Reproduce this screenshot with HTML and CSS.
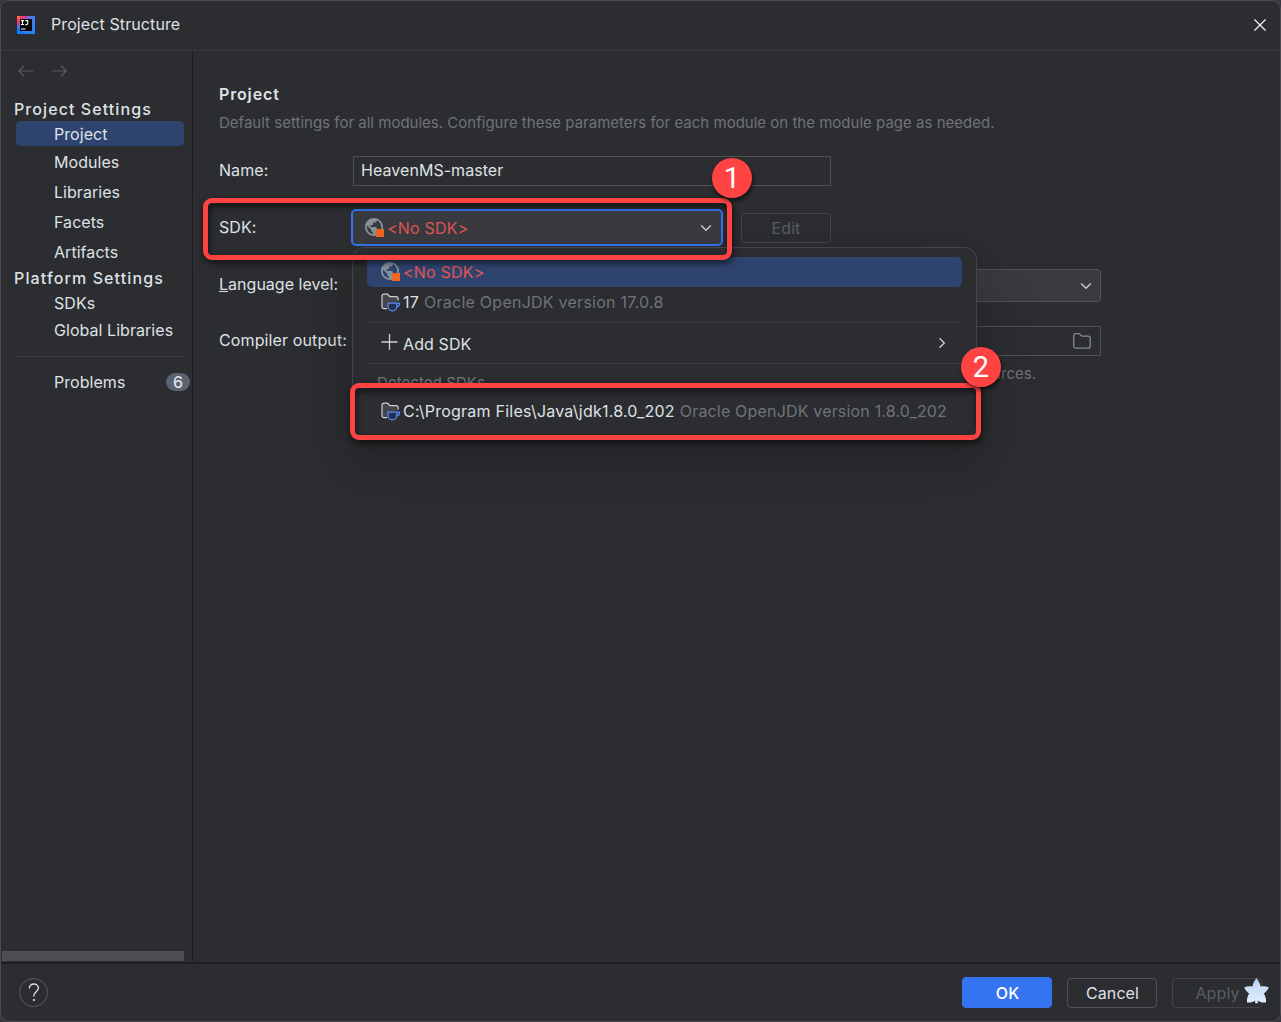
FILE: index.html
```html
<!DOCTYPE html>
<html lang="en">
<head>
<meta charset="utf-8">
<title>Project Structure</title>
<link rel="stylesheet" href="styles.css">
</head>
<body>
<svg width="0" height="0" class="defs" aria-hidden="true">
  <symbol id="globe" viewBox="0 0 20 20">
    <path transform="translate(-1.800 -1.800) scale(.9)" d="M12 2C6.480 2 2 6.480 2 12s4.480 10 10 10 10-4.480 10-10S17.520 2 12 2zm-1 17.930c-3.950-.490-7-3.850-7-7.930 0-.620.080-1.210.210-1.790L9 15v1c0 1.100.9 2 2 2v1.930zm6.900-2.540c-.260-.810-1-1.390-1.900-1.390h-1v-3c0-.550-.450-1-1-1H8v-2h2c.550 0 1-.450 1-1V7h2c1.100 0 2-.9 2-2v-.410c2.930 1.190 5 4.060 5 7.410 0 2.080-.8 3.970-2.100 5.390z" fill="#87939a"/>
    <rect x="11" y="11" width="8" height="8" fill="#f26522"/>
  </symbol>
  <symbol id="jdk" viewBox="0 0 20 20">
    <path d="M6 16.700H3a2 2 0 0 1-2-2V4a1.800 1.800 0 0 1 1.800-1.800h3.700l2.500 2.400H15A2.200 2.200 0 0 1 17.200 6.800V8.500" fill="#43454a" stroke="#ced0d6" stroke-width="1.200"/>
    <path d="M7 11.200h8.800v3.200a4.400 4.400 0 0 1-8.800 0zM15.800 11.200h2.800c.2 2.300-1 3.300-3 3.300" fill="#25324d" stroke="#548af7" stroke-width="1.300"/>
  </symbol>
  <symbol id="down" viewBox="0 0 12 8"><path d="m1.200 1.500 4.800 4.800 4.800-4.800" fill="none" stroke="#ced0d6" stroke-width="1.300"/></symbol>
</svg>
<div class="window">
  <header class="titlebar">
    <svg class="logo" width="18" height="18" viewBox="0 0 18 18">
      <defs>
        <linearGradient id="lg" x1="0" y1="0" x2="1" y2="1"><stop offset="0" stop-color="#ff8a2a"/><stop offset=".18" stop-color="#fe2d6c"/><stop offset=".42" stop-color="#4b7bf0"/><stop offset="1" stop-color="#1688f5"/></linearGradient>
      </defs>
      <path d="M0 0h18v18H0z" fill="url(#lg)"/><path d="M0 8v10h9L2 13z" fill="#087cfa"/>
      <path d="M3 3h12v12H3z" fill="#080408"/>
      <path d="M4 4.600h3M5.500 4.600v4M4 8.500h3M8.300 4.600h2.400v3c0 .8-.5 1.100-1.200 1.100H8M4 13h4.500" fill="none" stroke="#fff" stroke-width="1.100"/>
    </svg>
    <span class="title">Project Structure</span>
    <svg class="close" width="12" height="12" viewBox="0 0 12 12"><path d="m.4.4 11.200 11.200M11.600.4.4 11.600" stroke="#f0f1f3" stroke-width="1.250"/></svg>
  </header>
  <div class="body">
    <aside class="sidebar">
      <div class="history">
        <svg width="16" height="12" viewBox="0 0 16 12"><path d="M15.500 6H1M6 .700.900 6 6 11.300" fill="none" stroke="#5a5d63" stroke-width="1.200"/></svg>
        <svg width="16" height="12" viewBox="0 0 16 12"><path d="M.5 6H15M10 .700 15.100 6 10 11.300" fill="none" stroke="#5a5d63" stroke-width="1.200"/></svg>
      </div>
      <div class="group">Project Settings</div>
      <div class="item selected">Project</div>
      <div class="item first">Modules</div>
      <div class="item">Libraries</div>
      <div class="item">Facets</div>
      <div class="item">Artifacts</div>
      <div class="group platform">Platform Settings</div>
      <div class="item sdks">SDKs</div>
      <div class="item global">Global Libraries</div>
      <hr>
      <div class="item problems"><span>Problems</span><b>6</b></div>
      <div class="scrollbar"></div>
    </aside>
    <main class="content">
      <h1>Project</h1>
      <p class="desc">Default settings for all modules. Configure these parameters for each module on the module page as needed.</p>
      <div class="row name"><label>Name:</label><div class="input">HeavenMS-master</div></div>
      <div class="row sdk"><label>SDK:</label>
        <div class="combo focused"><svg width="20" height="20"><use href="#globe"/></svg><span>&lt;No SDK&gt;</span><svg class="chev" width="12" height="8"><use href="#down"/></svg></div>
        <div class="button edit">Edit</div>
      </div>
      <div class="row level"><label><u>L</u>anguage level:</label><div class="combo wide"><svg class="chev" width="12" height="8"><use href="#down"/></svg></div></div>
      <div class="row output"><label>Compiler output:</label><div class="input wide"><svg class="chev" width="18" height="16" viewBox="0 0 18 16"><path d="M.700 2.700a2 2 0 0 1 2-2h3.500l3 2.500h6a2 2 0 0 1 2 2v8a2 2 0 0 1-2 2H2.700a2 2 0 0 1-2-2z" fill="none" stroke="#868a91" stroke-width="1.300"/></svg></div></div>
      <p class="note">sources.</p>
    </main>
  </div>
  <footer class="footer">
    <div class="help"><svg width="12" height="19" viewBox="0 0 12 19"><path d="M1.300 5.500C1.300 2.700 3.200 1 5.800 1s4.600 1.700 4.600 4.100c0 3.300-4.500 3.800-4.500 7.200v1.200" fill="none" stroke="#dfe1e5" stroke-width="1.300"/><circle cx="5.900" cy="17" r="1.100" fill="#dfe1e5"/></svg></div>
    <div class="button primary">OK</div>
    <div class="button">Cancel</div>
    <div class="button disabled">Apply</div>
  </footer>
</div>

<div class="popup">
  <div class="option active"><svg width="20" height="20"><use href="#globe"/></svg><span>&lt;No SDK&gt;</span></div>
  <div class="option"><svg width="20" height="20"><use href="#jdk"/></svg><span>17</span><em>Oracle OpenJDK version 17.0.8</em></div>
  <div class="option add"><svg width="18" height="18" viewBox="0 0 18 18"><path d="M8.500 0v16M.5 8h16" stroke="#ced0d6" stroke-width="1.300"/></svg><span>Add SDK</span><svg class="more" width="8" height="12" viewBox="0 0 8 12"><path d="m1.500 1.200 4.800 4.800-4.800 4.800" fill="none" stroke="#ced0d6" stroke-width="1.300"/></svg></div>
  <div class="caption">Detected SDKs</div>
  <div class="option detected"><svg width="20" height="20"><use href="#jdk"/></svg><span>C:\Program Files\Java\jdk1.8.0_202</span><em>Oracle OpenJDK version 1.8.0_202</em></div>
</div>

<div class="frame frame-one"></div><div class="frame frame-two"></div>
<div class="step step-one">1</div><div class="step step-two">2</div>
<svg class="leaf" width="26" height="26" viewBox="0 0 26 26">
  <defs><linearGradient id="leaf" x1="0" y1="0" x2="0" y2="1"><stop offset="0" stop-color="#b9d3f3"/><stop offset="1" stop-color="#e3effc"/></linearGradient></defs>
  <path d="M13.500.300c2 2.300 3.400 4.800 4 8.200 2.600-.6 5.500-.5 8.300.8-1 2.700-2.700 4.700-5 6.200 1.800 2.700 2.500 5.800 2.200 9-3 .3-6-.3-8.300-2l.3 2.800h-3l.3-2.800c-2.300 1.700-5.300 2.300-8.300 2-.3-3.200.4-6.300 2.200-9-2.300-1.500-4-3.500-5-6.200 2.800-1.300 5.700-1.400 8.300-.8.600-3.400 2-5.900 4-8.200z" fill="url(#leaf)"/>
</svg>
</body>
</html>
```
FILE: styles.css
```css
* { box-sizing: border-box; }
body { margin: 0; width: 1281px; height: 1022px; overflow: hidden; position: relative; background: #3a3644; font: 16px/20px Inter, sans-serif; color: #dfe1e5; white-space: nowrap; }
h1, p { margin: 0; font-weight: 400; }
svg { display: block; flex: none; }
em { font-style: normal; color: #6f737a; }
.defs { position: absolute; }
.window { height: 1022px; display: flex; flex-direction: column; background: #2b2d30; border: 1px solid #4b4c4f; border-radius: 9px; }
.titlebar { height: 50px; flex: none; display: flex; align-items: center; padding: 0 13px 2px 16px; border-bottom: 1px solid #393b40; }
.title { margin-left: 16px; padding-bottom: 2px; letter-spacing: .1px; }
.close { margin-left: auto; margin-right: 1px; }
.body { flex: 1; display: flex; min-height: 0; }
.sidebar { width: 192px; display: flex; flex-direction: column; border-right: 1px solid #1e1f22; letter-spacing: .05px; }
.history { display: flex; gap: 17px; padding: 14px 0 0 17px; height: 48px; }
.group { height: 22px; line-height: 20px; padding-left: 13px; letter-spacing: 1.08px; font-weight: 500; }
.item { height: 30px; line-height: 30px; padding-left: 53px; }
.item.selected { height: 25px; line-height: 26px; margin-left: 15px; margin-right: 8px; padding-left: 38px; background: #2e436e; border-radius: 5px; }
.item.first { margin-top: 1px; }
.platform { height: 21px; line-height: 22px; letter-spacing: 1.12px; }
.sdks { height: 29px; }
.global { height: 26px; line-height: 26px; }
hr { width: 168px; border: 0; margin: 13px 0 10px 14px; height: 1px; background: #393b40; flex: none; }
.problems { display: flex; align-items: center; justify-content: space-between; padding-right: 2px; }
.problems b { width: 24px; height: 18px; line-height: 18px; border-radius: 9px; background: #5a6371; text-align: center; font-weight: 500; }
.scrollbar { margin: auto 0 1px 1px; width: 182px; height: 10px; background: #4d4f52; }
.content { flex: 1; padding: 33px 0 0 26px; }
h1 { font-size: 16px; font-weight: 600; line-height: 20px; letter-spacing: .85px; }
.desc { font-size: 15px; line-height: 20px; margin-top: 9px; color: #6f737a; letter-spacing: .01px; }
.row { display: flex; align-items: center; }
.row label { width: 134px; flex: none; padding-bottom: 2px; letter-spacing: .07px; }
.input { width: 478px; height: 30px; border: 1px solid #4e5157; padding-left: 7px; line-height: 27px; letter-spacing: .05px; }
.name { margin-top: 23px; }
.sdk { margin-top: 23px; height: 37px; }
.combo { display: flex; align-items: center; border: 1px solid #4e5157; border-radius: 4px; background: #393b40; height: 33px; }
.combo.focused { width: 372px; height: 37px; border: 2px solid #3574f0; margin-left: -2px; border-radius: 5px; color: #e05555; padding: 0 9px 0 12px; gap: 2px; letter-spacing: .2px; }
.chev { margin-left: auto; }
.button { width: 90px; height: 30px; border: 1px solid #4e5157; border-radius: 4px; display: flex; align-items: center; justify-content: center; letter-spacing: .1px; }
.edit { margin-left: 18px; border-color: #43454a; color: #5a5d63; }
.level { margin-top: 23px; height: 33px; }
.level label { padding-bottom: 4px; letter-spacing: .02px; }
.wide { width: 748px; padding-right: 8px; display: flex; align-items: center; }
.input.wide { padding-right: 9px; }
.output { margin-top: 24px; }
.output label { letter-spacing: .12px; }
.note { width: 817px; text-align: right; font-size: 15px; color: #6f737a; margin-top: 8px; }
.footer { height: 59px; flex: none; display: flex; align-items: center; padding: 0 18px 0; gap: 15px; border-top: 2px solid #1e1f22; }
.help { width: 29px; height: 29px; border: 1px solid #5a5d63; border-radius: 50%; display: flex; align-items: center; justify-content: center; margin-right: auto; }
.footer .button { padding: 1px 0 0 1px; }
.primary { height: 31px; background: #3574f0; border-color: #3574f0; color: #fff; font-weight: 500; }
.disabled { border-color: #43454a; color: #5a5d63; }
.popup { position: absolute; left: 352px; top: 247px; width: 625px; height: 190px; background: #2b2d30; border: 1px solid #43454a; border-radius: 12px; padding: 9px 14px 0; box-shadow: 0 24px 50px 10px rgba(0,0,0,.17); }
.option { display: flex; align-items: center; height: 30px; padding-left: 14px; gap: 2px; letter-spacing: .23px; }
.option em { margin-left: 3px; letter-spacing: .25px; }
.detected em { letter-spacing: .18px; }
.active { background: #2e436e; color: #e05555; border-radius: 5px; letter-spacing: .2px; }
.add { height: 42px; margin-top: 5px; border: solid #393b40; border-width: 1px 0; gap: 4px; letter-spacing: .1px; }
.add span { padding-top: 2px; }
.more { margin-left: auto; margin-right: 16px; }
.caption { height: 32px; line-height: 37px; padding-left: 10px; color: #6f737a; font-size: 15px; letter-spacing: .07px; }
.frame { position: absolute; border: 5px solid #ff4343; border-radius: 9px; filter: drop-shadow(1px 3px 3px rgba(0,0,0,.7)); }
.frame-one { left: 203px; top: 198px; width: 529px; height: 62px; }
.frame-two { left: 350px; top: 383px; width: 631px; height: 57px; }
.step { position: absolute; width: 40px; height: 40px; border-radius: 50%; background: #ff4343; color: #fff; font: 29px/41px Roboto, sans-serif; text-align: center; box-shadow: 1px 3px 4px rgba(0,0,0,.6); }
.step-one { left: 712px; top: 158px; }
.step-two { left: 961px; top: 347px; }
.leaf { position: absolute; left: 1243px; top: 978px; }
```
